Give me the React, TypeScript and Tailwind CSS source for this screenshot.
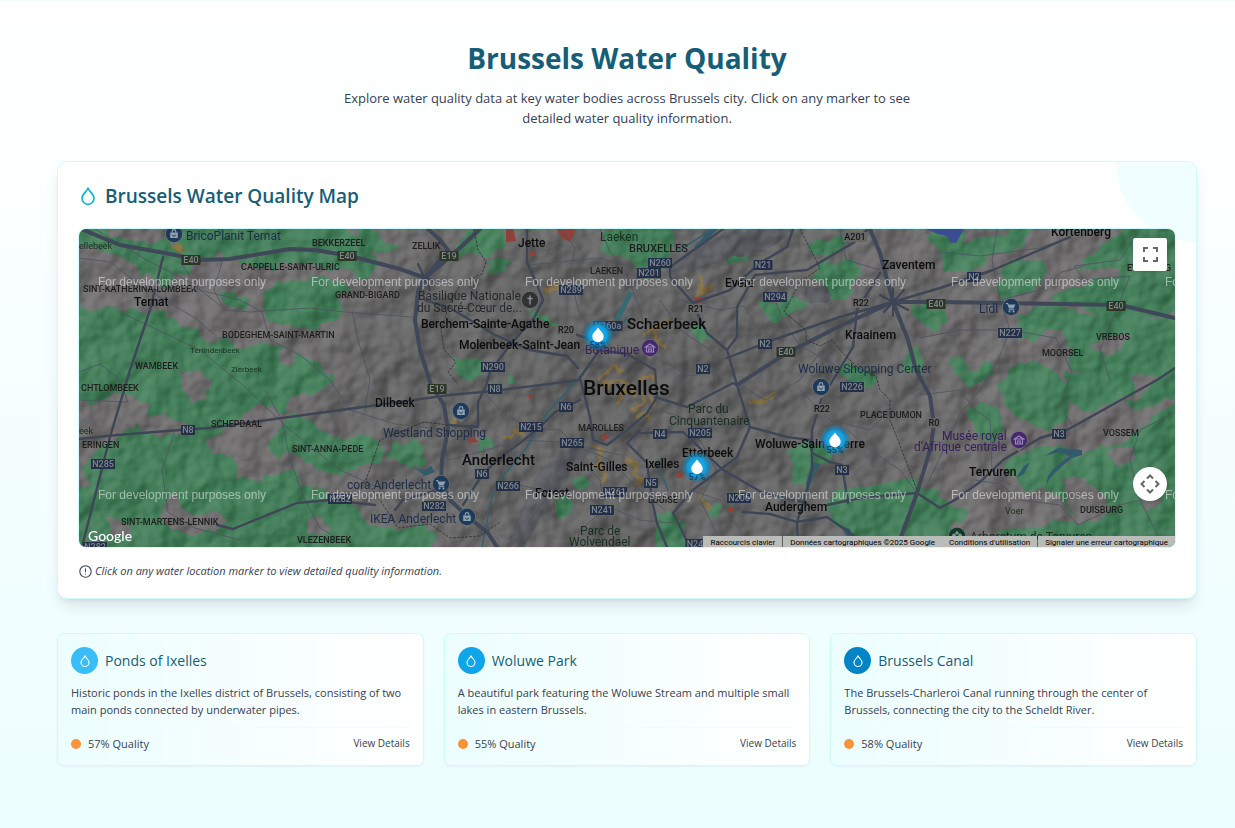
import React from "react";

type Tone = "town" | "city" | "hamlet" | "poi" | "park" | "shop" | "museum";

const BODY_FONT = "font-['Open_Sans','Noto_Sans',sans-serif]";
const MAP_FONT = "font-[Roboto,sans-serif]";

const greens: string[] = [
  "79,241 100,250 120,256 135,263 141,277 150,272 160,286 170,288 176,276 190,272 196,262 214,258 220,252 240,262 262,268 275,270 285,262 310,262 330,272 345,266 362,280 372,268 362,255 392,252 398,246 380,238 352,236 338,220 180,220 170,236 150,244 130,240 112,236 100,220 70,220",
  "265,292 280,282 306,280 320,276 340,282 352,290 338,296 344,306 338,318 312,330 290,326 268,322 262,308",
  "217,294 232,292 250,300 246,308 228,306",
  "66,340 92,322 112,314 128,308 146,314 160,310 178,322 196,330 206,344 226,338 240,350 262,340 290,352 316,362 334,378 318,392 290,396 286,414 260,404 244,416 224,430 206,440 212,452 234,458 238,476 258,482 280,474 296,468 300,486 322,488 336,500 350,498 366,522 378,530 370,560 66,560 66,492 90,486 84,470 96,450 116,440 136,424 150,406 132,398 112,392 96,404 66,398",
  "66,300 92,312 110,306 126,312 118,326 96,330 66,346",
  "290,412 310,420 326,436 344,440 362,434 370,446 388,450 380,462 356,468 338,474 320,470 306,460 288,450 276,460 268,446",
  "452,253 475,220 503,220 505,245 490,256 474,252 462,258",
  "488,262 504,257 514,262 504,270 490,274",
  "360,220 378,231 381,246 371,252 378,268 365,280 356,262",
  "640,220 671,220 674,242 668,262 660,276 646,278 636,266 628,258 600,252 606,232",
  "725,259 740,254 748,259 732,264",
  "806,246 820,240 830,242 840,234 848,240 838,252 824,258 814,254",
  "822,260 836,264 844,260 854,258 862,272 852,286 848,298 832,300 824,294 826,284 812,278 808,284",
  "757,300 776,306 792,296 808,304 796,312 784,316 774,324 764,314",
  "912,306 930,303 942,304 948,318 938,330 926,328 914,316",
  "908,350 916,346 924,360 920,374 904,370",
  "840,362 852,364 864,368 878,378 870,388 852,384 842,374",
  "787,450 806,442 828,446 834,460 820,464 810,472 802,486 792,482 794,466",
  "834,490 866,486 884,484 900,480 914,478 922,488 938,490 942,512 952,520 946,560 860,560 848,530 832,522 826,508",
  "656,514 670,512 684,524 688,560 658,560",
  "708,510 716,504 722,508 718,516 710,518",
  "452,360 480,358 482,376 470,382 456,372",
  "395,440 404,446 414,440 424,444 422,456 426,464 410,468 400,462 388,458",
  "360,436 370,434 380,444 374,458 362,466",
  "360,530 384,526 400,530 418,524 436,534 432,560 360,560",
  "476,442 490,436 494,446 480,452",
  "573,480 586,476 590,486 578,490",
  "554,502 566,496 572,502 570,514 562,520 554,514",
  "510,374 518,380 506,384",
  "530,309 558,324 556,328 528,314",
  "692,322 706,330 712,338 700,342 690,334",
  "940,252 952,248 966,242 986,236 1002,238 1010,230 1020,220 1036,220 1022,246 1008,254 990,254 984,266 972,272 944,272",
  "928,240 940,220 960,220 966,246 954,254 940,250",
  "1000,266 1014,258 1032,262 1044,260 1046,272 1040,284 1030,292 1016,296 1004,300 996,290 1002,280",
  "1078,272 1090,254 1104,244 1120,232 1140,220 1190,220 1190,306 1160,316 1136,318 1112,322 1096,314 1072,306 1050,300 1060,290 1084,286 1098,278 1118,276 1120,268 1096,268",
  "1018,318 1040,304 1066,308 1090,314 1120,318 1140,318 1190,318 1190,366 1160,378 1140,374 1120,378 1100,384 1080,372 1066,366 1072,350 1060,330 1046,330 1036,342 1022,336",
  "1010,368 1028,360 1048,366 1060,378 1072,390 1066,416 1048,432 1032,424 1014,416 1004,400 996,390",
  "1064,372 1100,374 1130,370 1136,392 1110,404 1084,412 1070,400",
  "950,360 960,356 970,366 966,374 952,372",
  "960,376 974,372 988,362 994,372 982,384 968,386",
  "966,408 984,404 1000,410 1006,430 990,442 978,438",
  "1004,462 1030,450 1048,446 1070,450 1060,466 1046,486 1028,492 1016,480 1006,476",
  "1056,468 1080,454 1100,448 1126,442 1140,430 1160,410 1190,398 1190,560 1080,560 1090,520 1070,514 1060,496 1044,490",
  "1124,402 1140,398 1156,380 1190,366 1190,390 1158,404 1140,410",
  "920,495 934,492 954,506 968,512 960,524 940,520 930,510",
  "1000,530 1030,528 1060,520 1088,524 1090,560 990,560",
  "230,484 250,490 244,500 228,496",
];

const grays: string[] = [
  "124,400 142,404 152,418 166,412 172,420 188,424 180,434 156,436 140,430",
  "180,372 200,370 212,382 206,396 194,404 184,392",
  "166,500 176,494 184,510 196,516 214,512 226,520 216,530 190,534 170,528 160,516",
  "106,516 120,520 134,532 128,540 112,534",
  "306,520 322,516 334,528 318,536 308,534",
  "1062,480 1076,476 1092,484 1104,496 1110,512 1096,522 1080,518 1068,506",
  "1106,450 1128,446 1136,458 1118,466",
  "1138,488 1156,492 1162,504 1144,510",
  "1090,346 1106,338 1130,334 1122,350 1104,356",
  "278,352 290,346 296,356 290,368 280,364",
  "216,276 228,272 238,282 230,292 218,288",
];

const urban: string[] = [
  "M668 268 L700 240 L750 229 L792 229 L775 247 L735 256 L690 272Z",
  "M512 530 L540 470 L575 440 L590 452 L555 492 L525 547 L508 547Z",
  "M800 290 L826 284 L832 300 L812 306Z",
];

const sandStreaks: string[] = [
  "M642 336L652 330L662 326L668 318M652 330L656 342L664 346M646 348L660 340",
  "M598 380L606 374L614 366L622 372M608 392L604 384L616 380L628 384M618 404L622 392L632 388L636 398M632 410L642 402L646 392",
  "M594 446L604 452L598 464L606 476L600 484M624 460L636 462L634 474L642 480L636 486",
  "M505 440L514 432L524 434M696 285L704 292L712 286M702 278L698 294",
  "M748 404L764 400L774 394M698 494L706 502L710 510M546 291L558 288M650 396L656 404L650 410",
  "M636 418L646 414L650 420M640 380L650 374L656 380",
];

const sand: string[] = [
  "M168 243l16 2 l-2 8 l-8 -2z",
  "M452 416 l6 8 l-5 1z",
];

const reds: string[] = [
  "M506 229l7 0l3 12 l-10 1z",
  "M556 229l20 0l-6 13 l-8 -4z",
  "M530 252 h6 v4 h-7z",
  "M694 299 l6 -3 l5 4 l-7 4z",
  "M468 439 l6 -2 l4 5 l-9 1z",
  "M527 394 l6 2 l-3 4z",
  "M601 437 l6 -4 l2 4 l-6 4z",
  "M675 474 l6 -2 l3 5 l-7 1z",
  "M728 507 h6 v4 h-6z",
];

const blues: string[] = [
  "M1016 478 L1024 466 L1030 462 L1024 474Z",
  "M1044 456 L1058 448 L1082 450 L1082 455 L1072 458 L1060 468 L1050 478 L1046 486 L1048 476 L1058 464 L1070 456 L1060 452Z",
  "M812 462 l8 2 l-4 8 l-6 14 l-2 6 l-2 -8z",
  "M840 525 l10 4 l6 14 l-10 -8z",
  "M415 468 l10 2 l6 -4 l4 6 l-10 4z",
  "M694 247 l18 -18 l6 0 l-20 19z",
];

const highways: string[] = [
  "M79 228 L98 236 L120 245 L165 253 L200 260 L230 259 L290 249 L315 250 L350 256 L400 269 L425 278",
  "M428 229 L440 240 L448 250 L425 278 L418 292 L415 320 L420 350 L431 385 L444 405 L448 430 L442 460 L441 480 L450 500 L468 517 L488 533 L497 547",
  "M480 229 L462 246 L444 262 L425 278",
  "M737 385 L787 353 L840 326 L893 302 L940 302 L1120 305 L1175 318",
  "M870 229 L880 253 L893 302 L908 340 L916 370 L930 396 L934 425 L930 450 L917 493 L900 540",
];

const majors: string[] = [
  "M527 229 L527 262 L536 282 L543 300 L534 318 L510 345 L490 372 L486 386 L478 402 L478 427 L448 425",
  "M79 439 L117 435 L180 430 L210 428 L260 421 L370 406 L450 395 L493 391 L580 380",
  "M163 257 L150 310 L130 370 L110 437 L82 547",
  "M577 335 L592 340 L598 352 L580 378 L590 417 L593 440 L607 445 L627 430 L647 413 L657 397 L655 370 L627 354 L598 350",
  "M655 397 L687 407 L733 383 L737 385 L750 427 L737 457 L693 490 L673 513",
  "M640 433 L683 432 L723 470 L763 493 L807 503",
  "M750 427 L787 437 L810 440 L812 453 L830 462 L842 465 L848 503",
  "M822 397 L812 430 L812 470 L804 500 L797 522 L798 547",
  "M827 505 L860 498 L917 493 L940 508 L955 500 L980 482 L1003 460 L1040 438 L1067 430 L1157 380 L1175 368",
  "M743 512 L770 514 L797 522 L827 517 L853 535",
  "M727 358 L773 340 L840 317 L893 302 L940 288 L993 270 L1070 237",
  "M867 230 L853 243 L807 270 L755 275 L737 307 L737 337 L727 350 L707 333 L697 313 L693 303 L670 277 L670 267 L723 229",
  "M693 303 L730 290 L760 263 L787 247 L793 229",
  "M727 350 L737 385",
  "M880 273 L857 310 L853 347 L830 385",
  "M217 525 L233 529 L260 518 L297 503 L330 500 L375 505",
  "M395 510 L403 500 L438 490 L445 480",
  "M463 505 L482 475 L497 460 L520 443 L540 427 L555 412 L580 400",
  "M627 443 L647 463 L652 500 L657 523 L667 547",
  "M673 513 L690 547",
  "M425 300 L450 308 L470 320 L495 335 L530 350 L567 356 L578 368",
  "M640 430 L627 443",
];

const minors: string[] = [
  "M79 258 L110 262 L140 285 L165 300 L195 318 L215 335",
  "M95 229 L150 262 L190 282 L226 310 L250 312 L310 308 L345 312 L412 317",
  "M120 312 L200 350 L245 387 L290 430 L340 470 L375 486",
  "M180 262 L200 290 L240 300 L262 312 L270 340 L300 355 L330 380",
  "M222 262 L214 290 L222 306",
  "M352 310 L358 340 L370 380 L365 410",
  "M79 400 L128 402 L118 378 L100 364 L79 372",
  "M175 430 L162 470 L168 512 L195 528 L240 540",
  "M265 390 L282 420 L290 460 L305 500 L320 528 L350 545",
  "M330 380 L350 410 L395 424 L448 430",
  "M560 229 L575 248 L570 272 L578 310 L592 330",
  "M530 265 L560 262 L600 258 L640 270",
  "M600 229 L610 252 L625 270 L640 310 L648 340",
  "M484 392 L505 415 L530 428 L560 430 L575 445 L560 480 L530 520 L520 547",
  "M448 460 L480 452 L520 440 L560 442 L620 455",
  "M500 480 L540 490 L580 495 L640 520 L680 524",
  "M575 445 L610 460 L640 490 L665 510",
  "M570 450 L600 480 L604 510 L580 530 L575 547",
  "M660 300 L680 330 L710 350 L720 370 L690 376 L660 360",
  "M680 300 L720 310 L745 306 L757 328",
  "M757 280 L775 300 L785 325 L800 346 L830 362",
  "M740 385 L765 400 L800 380 L820 352",
  "M660 410 L690 420 L720 424 L750 427",
  "M690 490 L720 500 L740 530 L745 547",
  "M800 390 L830 420 L870 430 L900 400 L925 385",
  "M848 430 L870 450 L900 470 L917 493",
  "M700 440 L716 470 L700 500 L720 540",
  "M997 229 L992 260 L1000 300 L1010 330 L998 360 L980 390 L960 414 L934 470 L925 490",
  "M920 338 L960 330 L1010 330 L1056 338 L1072 372 L1060 405 L1075 430",
  "M1140 229 L1120 260 L1074 266 L1084 280 L1130 276 L1112 320 L1100 350 L1110 380",
  "M1000 300 L1040 290 L1062 272 L1084 266",
  "M1175 412 L1140 430 L1130 460 L1140 500 L1160 540",
  "M920 395 L960 390 L975 410 L990 420 L992 470 L1010 485",
  "M975 480 L1000 484 L1020 500 L1060 505 L1078 525 L1120 505 L1140 500",
  "M840 229 L846 260 L880 270",
  "M940 252 L980 256 L1040 248 L1070 237",
];

const canals: string[] = [
  "M482 547 L492 497 L500 480 L527 447 L547 413 L577 380 L600 350 L627 318",
  "M680 250 L712 229",
  "M657 462 L668 490",
];

const labels: [string, number, number, Tone, number?][] = [
  ["BricoPlanit Ternat", 186, 240, "shop"],
  ["ellebeek", 79, 249, "park", 9],
  ["BEKKERZEEL", 312, 246, "hamlet"],
  ["ZELLIK", 412, 249, "hamlet"],
  ["CAPPELLE-SAINT-ULRIC", 241, 270, "hamlet"],
  ["SINT-KATHERINA-LOMBEEK", 83, 292, "hamlet"],
  ["Ternat", 134, 306, "town"],
  ["GRAND-BIGARD", 335, 298, "hamlet"],
  ["BODEGHEM-SAINT-MARTIN", 222, 338, "hamlet"],
  ["Terlindenbeek", 190, 353, "park", 8],
  ["WAMBEEK", 135, 369, "hamlet"],
  ["Zierbeek", 231, 372, "park", 8],
  ["Jette", 518, 247, "town"],
  ["Laeken", 600, 241, "park", 12],
  ["BRUXELLES", 629, 252, "hamlet", 11],
  ["LAEKEN", 590, 274, "hamlet"],
  ["Basilique Nationale", 418, 300, "poi"],
  ["du Sacré-Cœur de...", 417, 312, "poi"],
  ["Berchem-Sainte-Agathe", 421, 328, "town"],
  ["Molenbeek-Saint-Jean", 459, 349, "town"],
  ["Schaerbeek", 627, 329, "town", 15],
  ["Botanique", 585, 354, "museum", 12],
  ["Bruxelles", 583, 395, "city", 21],
  ["Evere", 725, 287, "town"],
  ["Zaventem", 882, 269, "town"],
  ["Kraainem", 845, 339, "town"],
  ["Woluwe Shopping Center", 798, 373, "shop", 12],
  ["Kortenberg", 1051, 236, "town"],
  ["Lidl", 979, 313, "shop", 12],
  ["VREBOS", 1096, 340, "hamlet"],
  ["MOORSEL", 1042, 356, "hamlet"],
  ["EVERBERG", 1127, 271, "hamlet"],
  ["CHTLOMBEEK", 81, 391, "hamlet"],
  ["eek", 79, 434, "park", 9],
  ["ERINGEN", 82, 448, "hamlet"],
  ["SCHEPDAAL", 211, 427, "hamlet"],
  ["SINT-ANNA-PEDE", 292, 452, "hamlet"],
  ["SINT-MARTENS-LENNIK", 121, 525, "hamlet"],
  ["VLEZENBEEK", 297, 543, "hamlet"],
  ["Dilbeek", 375, 407, "town"],
  ["Westland Shopping", 383, 437, "shop"],
  ["Anderlecht", 462, 465, "town", 15],
  ["cora Anderlecht", 347, 489, "shop"],
  ["IKEA Anderlecht", 370, 523, "shop"],
  ["Saint-Gilles", 566, 471, "town"],
  ["MAROLLES", 578, 431, "hamlet"],
  ["Forest", 535, 497, "town"],
  ["Parc de", 580, 535, "park", 12],
  ["Wolvendael", 569, 546, "park", 12],
  ["Ixelles", 645, 468, "town"],
  ["LOUISE", 648, 503, "hamlet"],
  ["Parc du", 688, 413, "park", 12],
  ["Cinquantenaire", 669, 425, "park", 12],
  ["Etterbeek", 682, 457, "town"],
  ["Woluwe-Saint-Pierre", 755, 448, "town"],
  ["PLACE DUMON", 860, 418, "hamlet"],
  ["Auderghem", 765, 511, "town"],
  ["Musée royal", 942, 440, "museum"],
  ["d'Afrique centrale", 914, 451, "museum"],
  ["Tervuren", 969, 476, "town"],
  ["VOSSEM", 1103, 436, "hamlet"],
  ["Voer", 1005, 514, "park", 9],
  ["DUISBURG", 1080, 513, "hamlet"],
  ["Arboretum de Tervuren", 970, 541, "park", 12],
];

const toneClass: Record<Tone, string> = {
  town: "fill-[#0c0c0c] font-medium",
  city: "fill-[#0c0c0c] font-medium",
  hamlet: "fill-[#1e1e1e] font-medium",
  poi: "fill-[#26292c]",
  park: "fill-[#17301f]",
  shop: "fill-[#1d2c49]",
  museum: "fill-[#37205a]",
};
const toneSize: Record<Tone, number> = {
  town: 12, city: 21, hamlet: 9, poi: 12, park: 9, shop: 12, museum: 12,
};

const shields: [string, number, number, "n" | "e" | "r"][] = [
  ["E40", 191, 260, "e"], ["E40", 347, 256, "e"], ["E19", 449, 256, "e"],
  ["E19", 437, 389, "e"], ["E40", 786, 352, "e"], ["E40", 936, 304, "e"],
  ["E40", 1116, 306, "e"], ["N260", 660, 263, "n"], ["N201", 649, 273, "n"],
  ["N289", 571, 290, "n"], ["N260a", 608, 326, "n"], ["N21", 763, 265, "n"],
  ["N294", 775, 297, "n"], ["N2", 765, 344, "n"], ["N2", 703, 369, "n"],
  ["N290", 493, 367, "n"], ["N8", 495, 389, "n"], ["N6", 566, 407, "n"],
  ["N215", 531, 427, "n"], ["N265", 572, 443, "n"], ["N6", 482, 474, "n"],
  ["N266", 508, 486, "n"], ["N282", 434, 506, "n"], ["N282", 340, 499, "n"],
  ["N241", 602, 510, "n"], ["N261", 615, 492, "n"], ["N5", 651, 483, "n"],
  ["N4", 660, 434, "n"], ["N205", 700, 433, "n"], ["N3", 842, 470, "n"],
  ["N206", 739, 498, "n"], ["N226", 852, 387, "n"], ["N24", 695, 544, "n"],
  ["N8", 188, 430, "n"], ["N285", 103, 464, "n"], ["N2", 974, 277, "n"],
  ["N227", 1010, 333, "n"], ["N3", 1059, 434, "n"], ["N282", 95, 547, "n"],
  ["R20", 566, 330, "r"], ["R21", 696, 309, "r"], ["R22", 861, 303, "r"],
  ["R22", 822, 409, "r"], ["R0", 934, 423, "r"], ["A201", 855, 237, "r"],
];

const watermarks: [number, number][] = [286, 499].flatMap((y) =>
  [98, 311, 525, 738, 951, 1165].map((x): [number, number] => [x, y]),
);

function Shield({ text, x, y, kind }: { text: string; x: number; y: number; kind: "n" | "e" | "r" }) {
  const w = text.length * 5 + 4;
  const box = kind === "n" ? "fill-[#233048]" : kind === "e" ? "fill-[#2b3624]" : "fill-[#666666]";
  const ink = kind === "r" ? "fill-[#161616]" : "fill-[#7f858d]";
  return (
    <g>
      <rect x={x - w / 2} y={y - 5} width={w} height={10} className={box} />
      <text x={x} y={y + 3} textAnchor="middle" fontSize={9} className={`${ink} font-medium`}>{text}</text>
    </g>
  );
}

function PlacePin({ x, y, color, kind }: { x: number; y: number; color: string; kind: "bag" | "cart" | "museum" | "church" | "flower" }) {
  return (
    <g transform={`translate(${x} ${y})`}>
      <path d="M-9 0A9 9 0 1 1 9 0C9 5 3 8 0 12C-3 8 -9 5 -9 0Z" fill="#6f7173" />
      <circle r="8.2" fill={color} />
      {kind === "bag" && (
        <g>
          <path d="M-3.8 -1.500h7.600v5.500h-7.600z" fill="#8fa0b0" />
          <path d="M-1.800 -1.500v-1a1.800 1.800 0 0 1 3.600 0v1" fill="none" stroke="#8fa0b0" strokeWidth="1.2" />
          <path d="M-1.500 .8a1.500 1.500 0 0 0 3 0" fill="none" stroke={color} strokeWidth="0.9" />
        </g>
      )}
      {kind === "cart" && (
        <g fill="#8fa0b0">
          <path d="M-5 -4h2l.6 1.4H4.5L2.6 1.5H-2L-3.8 -3H-5zM-2 2.3H3.5v1H-3z" />
          <circle cx="-1.5" cy="4.4" r="1" /><circle cx="2.5" cy="4.4" r="1" />
        </g>
      )}
      {kind === "museum" && <path d="M-4.5 -1L0 -4L4.5 -1zM-3.5 -1v5h7v-5M-1.3 4v-3h2.6v3" fill="none" stroke="#9b87b8" strokeWidth="1.2" />}
      {kind === "church" && <path d="M0 -4.5V4.5M-2.6 -1.6H2.6" stroke="#8c8c8c" strokeWidth="1.5" />}
      {kind === "flower" && (
        <g fill="#7f9b8b">
          <circle cx="0" cy="-3" r="1.7" /><circle cx="3" cy="-.8" r="1.7" /><circle cx="1.9" cy="2.6" r="1.7" />
          <circle cx="-1.9" cy="2.6" r="1.7" /><circle cx="-3" cy="-.8" r="1.7" />
        </g>
      )}
    </g>
  );
}

function MapDrawing() {
  return (
    <svg viewBox="79 229 1096 318" preserveAspectRatio="xMidYMid slice" className={`isolate block size-full ${MAP_FONT}`} role="img" aria-label="Map of Brussels">
      <defs>
        <radialGradient id="ground" gradientUnits="userSpaceOnUse" cx="0" cy="0" r="1" gradientTransform="translate(640 390) scale(380 260)">
          <stop offset="0" stopColor="#5b5b5b" />
          <stop offset="0.6" stopColor="#616161" />
          <stop offset="1" stopColor="#6a6868" />
        </radialGradient>
        <filter id="rough" x="0" y="0" width="100%" height="100%">
          <feTurbulence type="fractalNoise" baseFrequency="0.1" numOctaves="2" seed="4" result="n" />
          <feDisplacementMap in="SourceGraphic" in2="n" scale="9" xChannelSelector="R" yChannelSelector="G" />
        </filter>
        <filter id="relief" x="0" y="0" width="100%" height="100%" colorInterpolationFilters="sRGB">
          <feTurbulence type="fractalNoise" baseFrequency="0.03 0.03" numOctaves="3" seed="11" result="n" />
          <feColorMatrix in="n" type="matrix" values="0 0 0 0 0  0 0 0 0 0  0 0 0 0 0  1 0 0 0 0" result="h" />
          <feDiffuseLighting in="h" surfaceScale="9" diffuseConstant="0.92" lightingColor="#ffffff">
            <feDistantLight azimuth="215" elevation="42" />
          </feDiffuseLighting>
        </filter>
      </defs>
      <rect x="79" y="229" width="1096" height="318" fill="#646464" />
      <g filter="url(#rough)">
        <rect x="60" y="210" width="1140" height="360" fill="url(#ground)" />
        {greens.map((p) => <polygon key={p} points={p} fill="#3f7a57" />)}
        {grays.map((p) => <polygon key={p} points={p} fill="#6a6868" />)}
        {urban.map((d) => <path key={d} d={d} fill="#55575c" />)}
        {sand.map((d) => <path key={d} d={d} fill="#86703c" />)}
        {sandStreaks.map((d) => <path key={d} d={d} fill="none" stroke="#7a6840" strokeWidth="4" />)}
      </g>
      <rect x="79" y="229" width="1096" height="318" filter="url(#relief)" className="opacity-40 mix-blend-soft-light" />
      <path d="M926 229H964L960 236L956 243L950 242L947 236L938 234Z" fill="#3c4c93" />
      {reds.map((d) => <path key={d} d={d} fill="#8f4039" />)}
      {blues.map((d) => <path key={d} d={d} fill="#315a6b" />)}
      <path d="M617 320L631 292" stroke="#356b75" strokeWidth="5" />
      <g fill="none" strokeLinejoin="round" strokeLinecap="round">
        {canals.map((d) => <path key={d} d={d} stroke="#31606f" strokeWidth="1.5" />)}
        {minors.map((d) => <path key={d} d={d} stroke="#4b5361" strokeWidth="0.8" />)}
        {majors.map((d) => <path key={d} d={d} stroke="#3e4656" strokeWidth="2.4" />)}
        {highways.map((d) => <path key={d} d={d} stroke="#3f4758" strokeWidth="4" />)}
        <path d="M880 295L908 310M884 312L904 290M893 288V316M410 272L438 282M418 264L430 290" stroke="#3c4455" strokeWidth="2" />
        <path d="M474 229L478 250L486 262L482 274L462 282L450 302L441 330L444 350L456 362L448 372L458 384M800 229L820 268L800 282L784 312L806 330L806 340L820 346L832 340L842 352L858 368L876 376L880 390L890 400V420L898 440L917 490M448 425L424 422L380 440L366 480L380 500L398 528L430 524L450 538L480 536L500 522" stroke="#2f2f2f" strokeWidth="0.8" strokeDasharray="2 2" />
      </g>
      {shields.map(([t, x, y, k]) => <Shield key={`${t}${x}`} text={t} x={x} y={y} kind={k} />)}
      <PlacePin x={174} y={234} color="#1d3a59" kind="bag" />
      <PlacePin x={461} y={411} color="#1d3a59" kind="bag" />
      <PlacePin x={441} y={484} color="#1d3a59" kind="cart" />
      <PlacePin x={467} y={517} color="#1d3a59" kind="bag" />
      <PlacePin x={821} y={387} color="#1d3a59" kind="bag" />
      <PlacePin x={1011} y={307} color="#1d3a59" kind="cart" />
      <PlacePin x={650} y={348} color="#45286d" kind="museum" />
      <PlacePin x={1019} y={440} color="#45286d" kind="museum" />
      <PlacePin x={530} y={300} color="#2f3336" kind="church" />
      <PlacePin x={957} y={536} color="#15382c" kind="flower" />
      {labels.map(([t, x, y, tone, size]) => (
        <text key={`${t}${x}`} x={x} y={y} fontSize={size ?? toneSize[tone]} className={toneClass[tone]}>{t}</text>
      ))}
      {watermarks.map(([x, y]) => (
        <text key={`${x}-${y}`} x={x} y={y} fontSize={12} className="fill-white/50 font-['Liberation_Sans',sans-serif]">
          For development purposes only
        </text>
      ))}
      <text x="88" y="541" fontSize={14} className="fill-white font-medium font-[Lato,sans-serif]">Google</text>
    </svg>
  );
}

const markers = [
  { name: "Brussels Canal", quality: "58%", x: 598, y: 335 },
  { name: "Woluwe Park", quality: "55%", x: 835, y: 440 },
  { name: "Ponds of Ixelles", quality: "57%", x: 697, y: 467 },
];

function MapMarker({ name, quality, x, y }: (typeof markers)[number]) {
  return (
    <button
      type="button"
      aria-label={`${name}, ${quality}`}
      className="absolute size-8 -translate-x-1/2 -translate-y-1/2"
      style={{ left: `${((x - 79) / 1096) * 100}%`, top: `${((y - 229) / 318) * 100}%` }}
    >
      <svg viewBox="0 0 32 32" className={`block size-full overflow-visible ${MAP_FONT}`} aria-hidden="true">
        <defs>
          <radialGradient id="halo">
            <stop offset="0" stopColor="#25b4f5" />
            <stop offset="0.6" stopColor="#139fdf" />
            <stop offset="0.75" stopColor="#118cc6" stopOpacity="0.7" />
            <stop offset="1" stopColor="#117db0" stopOpacity="0.25" />
          </radialGradient>
        </defs>
        <circle cx="16" cy="16" r="15" fill="url(#halo)" />
        <text x="16" y="29" textAnchor="middle" fontSize={9} className="fill-[#0b4464] font-medium">{quality}</text>
        <path d="M16 8.500C17.800 11.500 21.700 14 21.700 17.500A5.700 5.700 0 0 1 10.300 17.500C10.300 14 14.200 11.500 16 8.500Z" fill="#ffffff" />
      </svg>
    </button>
  );
}

function Droplet({ className }: { className: string }) {
  return (
    <svg viewBox="0 0 24 24" fill="none" stroke="currentColor" strokeLinecap="round" strokeLinejoin="round" className={className} aria-hidden="true">
      <path d="M12 1.500C10.800 5.500 4 9.500 4 15a8 8 0 0 0 16 0C20 9.500 13.200 5.500 12 1.500Z" strokeWidth="2.2" />
    </svg>
  );
}

function MapAttribution() {
  return (
    <div className={`absolute right-0 bottom-0 flex h-[11px] gap-px overflow-hidden text-[8px] leading-[14px] text-black ${MAP_FONT}`}>
      <button type="button" className="h-[14px] bg-[#b9bcb9] px-[7px]">Raccourcis clavier</button>
      <span className="-mr-px h-[14px] bg-[#b9bcb9] px-[7px]">Données cartographiques ©2025 Google</span>
      <a href="#terms" className="h-[14px] bg-[#b9bcb9] px-[7px]">Conditions d'utilisation</a>
      <a href="#report" className="h-[14px] bg-[#b9bcb9] px-[7px]">Signaler une erreur cartographique</a>
    </div>
  );
}

const places = [
  {
    name: "Ponds of Ixelles",
    text: "Historic ponds in the Ixelles district of Brussels, consisting of two main ponds connected by underwater pipes.",
    quality: "57% Quality",
    color: "bg-[#38bdf8]",
  },
  {
    name: "Woluwe Park",
    text: "A beautiful park featuring the Woluwe Stream and multiple small lakes in eastern Brussels.",
    quality: "55% Quality",
    color: "bg-[#0ea5e9]",
  },
  {
    name: "Brussels Canal",
    text: "The Brussels-Charleroi Canal running through the center of Brussels, connecting the city to the Scheldt River.",
    quality: "58% Quality",
    color: "bg-[#0284c7]",
  },
];

export default function App() {
  return (
    <main className={`min-h-screen border-t border-[#ecfbff] bg-linear-to-b from-white to-[#ecfeff] pt-[39px] pr-[38px] pb-[61px] pl-[57px] text-[#374151] ${BODY_FONT}`}>
      <header className="text-center">
        <h1 className="text-[28px] leading-9 font-bold text-[#155e75]">Brussels Water Quality</h1>
        <p className="mx-auto mt-3 max-w-[590px] text-[13px] leading-5">
          Explore water quality data at key water bodies across Brussels city. Click on any marker to see detailed water quality information.
        </p>
      </header>

      <section className="relative mt-[33px] overflow-hidden rounded-[10px] border border-[#cffafe] bg-white px-[21px] pt-5 pb-[17px] shadow-lg">
        <div className="absolute top-0 right-0 size-20 rounded-bl-full bg-[#f0feff]" />
        <h2 className="relative flex h-7 items-center gap-2 text-[19px] font-semibold text-[#155e75]">
          <Droplet className="size-[18px] text-[#06b6d4]" />
          Brussels Water Quality Map
        </h2>
        <div className="relative mt-[19px] aspect-[1096/318] overflow-hidden rounded-[7px] ring-1 ring-[#cffafe]">
          <MapDrawing />
          {markers.map((m) => <MapMarker key={m.name} {...m} />)}
          <button type="button" aria-label="Toggle fullscreen" className="absolute top-[9px] right-2 flex h-[33px] w-[34px] items-center justify-center rounded-[2px] bg-white shadow">
            <svg viewBox="0 0 15 15" className="size-[15px]" fill="none" stroke="#666666" strokeWidth="2" aria-hidden="true">
              <path d="M1 5V1H5M10 1H14V5M14 10V14H10M5 14H1V10" />
            </svg>
          </button>
          <button type="button" aria-label="Map camera controls" className="absolute right-2 bottom-[46px] flex size-[34px] items-center justify-center rounded-full bg-white shadow">
            <svg viewBox="0 0 20 20" className="size-5" fill="none" stroke="#666666" strokeWidth="2" aria-hidden="true">
              <path d="M7 4.500L10 1.500L13 4.500M7 15.500L10 18.500L13 15.500M4.500 7L1.500 10L4.500 13M15.500 7L18.500 10L15.500 13" />
            </svg>
          </button>
          <MapAttribution />
        </div>
        <p className="mt-[14px] flex items-center gap-[3px] text-[11px] leading-5 italic">
          <svg viewBox="0 0 24 24" className="size-[13px]" fill="none" stroke="currentColor" strokeWidth="2" strokeLinecap="round" aria-hidden="true">
            <circle cx="12" cy="12" r="10.500" />
            <path d="M12 7v5.500M12 16.500h.01" />
          </svg>
          Click on any water location marker to view detailed quality information.
        </p>
      </section>

      <div className="mt-[34px] grid grid-cols-3 gap-5">
        {places.map((p) => (
          <article key={p.name} className="rounded-[7px] border border-[#cffafe] bg-linear-to-r from-[#ecfeff] to-white p-[13px] shadow-xs">
            <div className="flex items-center gap-[7px]">
              <span className={`flex size-[27px] items-center justify-center rounded-full text-white ${p.color}`}>
                <Droplet className="size-3" />
              </span>
              <h3 className="text-[14px] leading-5 text-[#155e75]">{p.name}</h3>
            </div>
            <p className="mt-[10px] text-[11px] leading-[17px]">{p.text}</p>
            <div className="mt-[9px] flex items-center justify-between border-t border-[#ecfeff] pt-[7px] leading-[17px]">
              <span className="flex items-center gap-[7px] text-[11px]">
                <span className="size-[10px] rounded-full bg-[#fb923c]" />
                {p.quality}
              </span>
              <button type="button" className="text-[10px] leading-[17px]">View Details</button>
            </div>
          </article>
        ))}
      </div>
    </main>
  );
}
